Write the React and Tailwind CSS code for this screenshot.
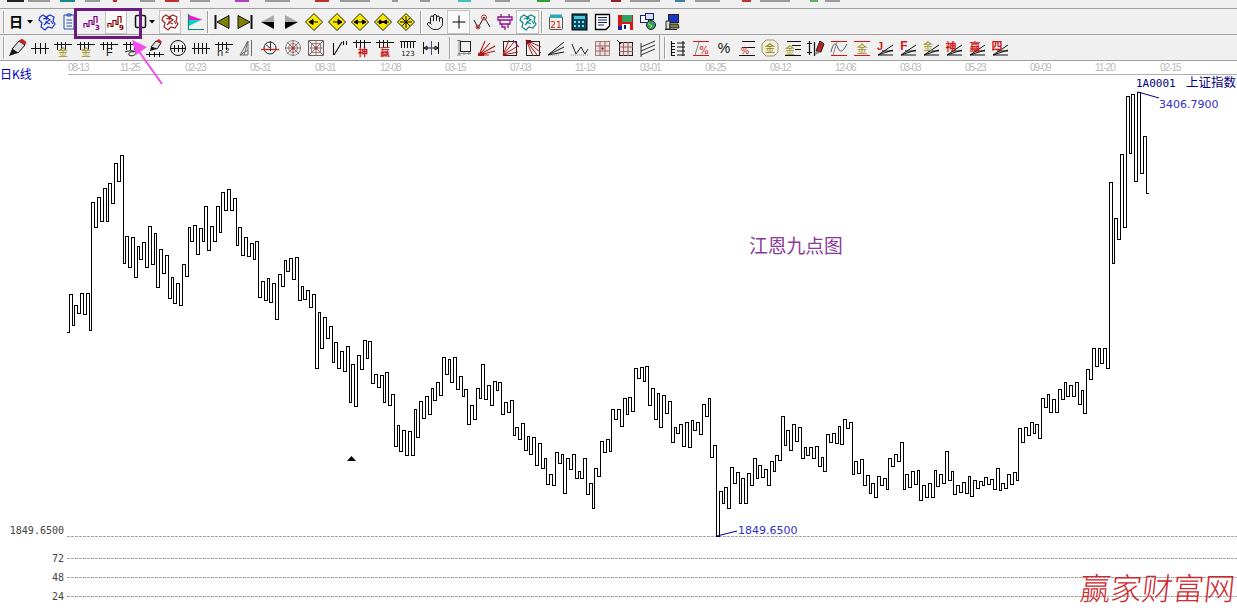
import { Hand } from "lucide-react";

const CJK = "Noto Sans CJK SC, sans-serif";
const DIGIT = "DejaVu Sans, sans-serif";
const MONO = "DejaVu Sans Mono, monospace";

const dates = ["11-25", "02-23", "05-31", "08-31", "12-08", "03-15", "07-03", "11-19", "03-01", "06-25", "09-12", "12-06", "03-03", "05-23", "09-09", "11-20", "02-15"];

// turning points of the nine point line: x, then the y it runs to
const line = [
  [69, 294], [72, 325], [74, 305], [77, 313], [80, 293], [83, 314], [86, 293], [89, 330], [91, 202], [94, 227],
  [97, 197], [100, 221], [103, 188], [106, 221], [108, 183], [111, 203], [114, 163], [117, 181], [120, 155], [123, 263],
  [125, 236], [128, 267], [131, 237], [134, 277], [137, 246], [139, 259], [142, 242], [145, 267], [148, 226], [151, 264],
  [154, 233], [156, 287], [159, 249], [162, 273], [165, 255], [168, 298], [171, 277], [173, 303], [176, 283], [179, 305],
  [182, 264], [185, 276], [188, 227], [190, 241], [193, 225], [196, 254], [199, 228], [202, 241], [204, 206], [207, 250],
  [210, 226], [213, 241], [216, 206], [219, 232], [221, 192], [224, 210], [227, 189], [230, 210], [233, 198], [236, 245],
  [238, 227], [241, 255], [244, 237], [247, 256], [250, 243], [253, 259], [255, 241], [258, 297], [261, 281], [264, 300],
  [267, 278], [269, 302], [272, 283], [275, 319], [278, 274], [281, 286], [284, 260], [286, 271], [289, 258], [292, 279],
  [295, 257], [298, 300], [301, 286], [303, 299], [306, 290], [309, 307], [312, 294], [315, 368], [318, 312], [320, 348],
  [323, 317], [326, 338], [329, 326], [332, 362], [334, 342], [337, 368], [340, 351], [343, 371], [346, 346], [349, 402],
  [351, 364], [354, 406], [357, 355], [360, 369], [363, 340], [366, 358], [368, 341], [371, 383], [374, 374], [377, 387],
  [380, 375], [383, 402], [385, 372], [388, 405], [391, 394], [394, 446], [397, 425], [399, 451], [402, 430], [405, 455],
  [408, 431], [411, 455], [414, 409], [416, 437], [419, 401], [422, 418], [425, 396], [428, 414], [431, 388], [433, 400],
  [436, 382], [439, 395], [442, 357], [445, 374], [448, 359], [450, 382], [453, 357], [456, 389], [459, 376], [462, 396],
  [464, 389], [467, 424], [470, 405], [473, 419], [476, 388], [479, 398], [481, 364], [484, 399], [487, 385], [490, 405],
  [493, 381], [496, 390], [498, 382], [501, 414], [504, 402], [507, 412], [510, 400], [513, 435], [515, 427], [518, 439],
  [521, 423], [524, 450], [527, 436], [529, 454], [532, 437], [535, 465], [538, 443], [541, 468], [544, 458], [546, 484],
  [549, 474], [552, 485], [555, 452], [558, 463], [561, 454], [563, 493], [566, 458], [569, 469], [572, 454], [575, 478],
  [578, 471], [580, 478], [583, 458], [586, 494], [589, 483], [592, 508], [594, 468], [597, 476], [600, 441], [603, 452],
  [606, 439], [609, 451], [611, 409], [614, 419], [617, 409], [620, 426], [623, 398], [626, 414], [628, 397], [631, 411],
  [634, 368], [637, 378], [640, 367], [643, 381], [645, 366], [648, 405], [651, 388], [654, 419], [657, 393], [659, 427],
  [662, 395], [665, 413], [668, 401], [671, 442], [674, 427], [676, 433], [679, 424], [682, 446], [685, 422], [688, 447],
  [691, 420], [693, 430], [696, 422], [699, 434], [702, 404], [705, 416], [708, 398], [710, 457], [713, 445], [716, 536],
  [719, 491], [722, 503], [724, 487], [727, 508], [730, 467], [733, 483], [736, 472], [739, 503], [741, 478], [744, 503],
  [747, 473], [750, 485], [753, 458], [756, 478], [758, 465], [761, 477], [764, 469], [767, 485], [770, 461], [773, 471],
  [775, 455], [778, 460], [781, 416], [784, 445], [786, 430], [789, 450], [792, 424], [795, 441], [798, 427], [801, 458],
  [804, 447], [806, 455], [809, 447], [812, 458], [815, 446], [818, 466], [821, 457], [823, 471], [826, 434], [829, 442],
  [832, 433], [835, 443], [838, 426], [840, 444], [843, 419], [846, 428], [849, 422], [852, 474], [854, 461], [857, 473],
  [860, 459], [863, 485], [866, 475], [869, 493], [871, 483], [874, 497], [877, 476], [880, 485], [883, 478], [886, 489],
  [888, 458], [891, 466], [894, 454], [897, 461], [900, 442], [903, 489], [905, 474], [908, 487], [911, 471], [914, 484],
  [917, 470], [919, 500], [922, 485], [925, 497], [928, 483], [931, 497], [934, 470], [936, 486], [939, 474], [942, 483],
  [945, 451], [948, 480], [951, 471], [953, 494], [956, 485], [959, 492], [962, 482], [965, 493], [968, 476], [970, 496],
  [973, 480], [976, 488], [979, 481], [982, 485], [984, 477], [987, 484], [990, 479], [993, 489], [996, 468], [999, 490],
  [1001, 483], [1004, 488], [1007, 474], [1010, 484], [1013, 472], [1016, 480], [1018, 428], [1021, 442], [1024, 427], [1027, 435],
  [1030, 422], [1033, 433], [1035, 424], [1038, 438], [1041, 398], [1044, 407], [1047, 394], [1049, 412], [1052, 399], [1055, 412],
  [1058, 389], [1061, 399], [1064, 382], [1066, 396], [1069, 385], [1072, 396], [1075, 382], [1078, 404], [1081, 390], [1083, 413],
  [1086, 369], [1089, 379], [1092, 348], [1095, 366], [1098, 348], [1100, 363], [1103, 348], [1106, 368], [1109, 182], [1112, 263],
  [1114, 218], [1117, 239], [1120, 154], [1123, 227], [1126, 96], [1129, 153], [1131, 94], [1134, 181], [1137, 92], [1140, 173],
  [1143, 136], [1146, 193],
];

const linePath = "M67 332.5" + line.map(([x, y]) => `H${x + 0.5}V${y + 0.5}`).join("") + "H1149";

// bits of the cut off menu bar icons at the very top
const topBits = [
  [7, 17, "#222"], [28, 22, "#999"], [60, 15, "#1a8a8a"], [85, 15, "#999"], [113, 4, "#d02020"], [140, 15, "#999"], [165, 14, "#c03030"],
  [190, 20, "#999"], [235, 14, "#b040c0"], [265, 25, "#999"], [315, 14, "#c03030"], [340, 30, "#999"], [392, 6, "#999"], [420, 10, "#999"],
  [458, 13, "#40c0c0"], [495, 15, "#999"], [537, 13, "#30a030"], [565, 25, "#999"], [611, 10, "#902020"], [630, 30, "#999"], [675, 10, "#4080a0"],
  [695, 25, "#999"], [742, 9, "#c03030"], [760, 30, "#999"], [810, 8, "#60b060"], [825, 15, "#999"],
];

function T({ w = "w-[23px]", pressed, children }) {
  return (
    <div className={`${w} h-[24px] shrink-0 flex items-center justify-center ${pressed ? "bg-[#f9f9f9] border border-[#c4c4c4]" : ""}`}>
      {children}
    </div>
  );
}

function Ic({ children, size = "w-5 h-5" }) {
  return (
    <svg viewBox="0 0 20 20" className={`${size} overflow-visible`} fill="none">
      {children}
    </svg>
  );
}

function Grip() {
  return <div className="w-[2px] h-[22px] shrink-0 border-l border-[#a0a0a0] bg-white" />;
}

function Label({ x, y, size = 8, fill = "#000", weight, children }) {
  return (
    <text x={x} y={y} fontSize={size} fill={fill} fontFamily={CJK} fontWeight={weight} textAnchor="middle">
      {children}
    </text>
  );
}

function Ticks({ n = 3, y = 4, x0 = 4, gap = 4, h = 8, color = "#111" }) {
  const xs = Array.from({ length: n }, (_, i) => x0 + i * gap + 0.5);
  return (
    <g stroke={color}>
      <path d={`M1 ${y + 2.5}H19`} />
      {xs.map((x) => (
        <path key={x} d={`M${x} ${y}v${h}`} />
      ))}
    </g>
  );
}

function Fan({ color = "#111" }) {
  return <path d="M3 17H18M3 17L18 12M3 17L18 7M7 13H18" stroke={color} />;
}

function Blob({ color }) {
  return (
    <path
      d="M3 5L6 3L9 5L13 3L17 5L16 9L18 12L15 16L11 15L8 18L4 15L5 11L2 8ZM6 7L10 6L13 8L9 10L13 12M7 13L10 10M11 4L9 8M14 9L16 12"
      stroke={color}
      strokeWidth="1.2"
    />
  );
}

function Wave({ color, n }) {
  return (
    <Ic>
      <path d="M2 15.5V11.5H5V14.5H7V8.5H10V12.5H12V4.5H15V11" stroke={color} strokeWidth="1.2" />
      <text x="13" y="18" fontSize="7" fontWeight="700" fill={color} fontFamily={DIGIT}>
        {n}
      </text>
    </Ic>
  );
}

function Diamond({ children }) {
  return (
    <Ic>
      <path d="M10 1.5L18.5 10L10 18.5L1.5 10Z" fill="#f8e800" stroke="#222" />
      <g stroke="#000" fill="#000">
        {children}
      </g>
    </Ic>
  );
}

function Pencil() {
  return (
    <>
      <path d="M5 11L12 3L18 7L11 15Z" fill="#e0e0e0" stroke="#111" />
      <path d="M12 3L15 1L19 4L18 7Z" fill="#d02020" stroke="#801010" strokeWidth="0.5" />
      <path d="M5 11L2 18L11 15Z" fill="#111" />
    </>
  );
}

function Row1() {
  return (
    <div className="h-[25px] flex items-center pl-[3px] border-b border-[#a0a0a0] box-content">
      <Grip />
      <T w="w-[21px]">
        <Ic>
          <Label x={10} y={15} size={14} weight="700">
            日
          </Label>
        </Ic>
      </T>
      <T w="w-[8px]">
        <svg viewBox="0 0 6 4" className="w-[6px] h-[4px]">
          <path d="M0 0H6L3 3.5Z" fill="#000" />
        </svg>
      </T>
      <div className="ml-px" />
      <T w="w-[24px]">
        <Ic>
          <Blob color="#2038c8" />
        </Ic>
      </T>
      <T w="w-[20px]">
        <Ic>
          <path d="M5 3H15V17H5ZM8 2H12V4H8ZM7.500 8H13M7.500 11H13M7.500 14H13" stroke="#2050b0" />
        </Ic>
      </T>
      <div className="ml-px" />
      <T w="w-[24px]">
        <Wave color="#800080" n="3" />
      </T>
      <div className="ml-px" />
      <T w="w-[22px]" pressed>
        <Wave color="#800000" n="9" />
      </T>
      <T w="w-[22px]">
        <Ic>
          <rect x="7.500" y="3.500" width="10" height="12" rx="1.500" stroke="#111" strokeWidth="1.500" />
        </Ic>
      </T>
      <T w="w-[6px]">
        <svg viewBox="0 0 6 4" className="w-[6px] h-[4px]">
          <path d="M0 0H6L3 3.5Z" fill="#000" />
        </svg>
      </T>
      <div className="ml-[4px]" />
      <T w="w-[22px]" pressed>
        <Ic>
          <Blob color="#a02828" />
        </Ic>
      </T>
      <div className="ml-[2px]" />
      <T w="w-[24px]">
        <Ic>
          <path d="M4 3L18 8H4Z" fill="#f018c8" />
          <path d="M4 8H16L4 14Z" fill="#10d0c0" />
          <path d="M3.500 2V17.500H19" stroke="#108080" strokeWidth="1.200" />
        </Ic>
      </T>
      <Grip />
      <div className="ml-px" />
      <T>
        <Ic>
          <path d="M3.500 3V17" stroke="#111" strokeWidth="2" />
          <path d="M17 3.500V16.500L5 10Z" fill="#808000" stroke="#111" />
        </Ic>
      </T>
      <T>
        <Ic>
          <path d="M16.500 3V17" stroke="#111" strokeWidth="2" />
          <path d="M3 3.500V16.500L15 10Z" fill="#808000" stroke="#111" />
        </Ic>
      </T>
      <T>
        <Ic>
          <path d="M16 3V10H3Z" fill="#a8a8a8" />
          <path d="M16 17V10H3Z" fill="#000" />
        </Ic>
      </T>
      <T>
        <Ic>
          <path d="M4 3V10H17Z" fill="#a8a8a8" />
          <path d="M4 17V10H17Z" fill="#000" />
        </Ic>
      </T>
      <T>
        <Diamond>
          <path d="M6 10H14" />
          <path d="M5 10L9 7.500V12.500Z" />
        </Diamond>
      </T>
      <T>
        <Diamond>
          <path d="M6 10H14" />
          <path d="M15 10L11 7.500V12.500Z" />
        </Diamond>
      </T>
      <T>
        <Diamond>
          <path d="M6 10H14" />
          <path d="M4 10L7.500 8V12Z" />
          <path d="M16 10L12.500 8V12Z" />
        </Diamond>
      </T>
      <T>
        <Diamond>
          <path d="M4 10H16" />
          <path d="M10 10L6.500 8V12Z" />
          <path d="M10 10L13.500 8V12Z" />
        </Diamond>
      </T>
      <T>
        <Diamond>
          <path d="M4 10H16M10 4V16M6 6L14 14M14 6L6 14" />
        </Diamond>
      </T>
      <div className="ml-[3px]" />
      <Grip />
      <div className="ml-px" />
      <T>
        <Hand size={18} strokeWidth={1.3} color="#111" />
      </T>
      <div className="ml-px" />
      <T pressed>
        <Ic>
          <path d="M10 3.500V16.500M3.500 10H16.500" stroke="#000" />
        </Ic>
      </T>
      <T>
        <Ic>
          <path d="M2 8L6 16L12 5L18 15" stroke="#222" />
          <circle cx="6" cy="15" r="2" stroke="#d02020" />
          <circle cx="12" cy="5.500" r="2.500" stroke="#d02020" />
        </Ic>
      </T>
      <T>
        <Ic>
          <path d="M3 5H17V8H3ZM6 2V5M14 2V5M5 8V12H15V8M7 12V15H10V18M13 12V16" stroke="#901090" strokeWidth="1.300" />
        </Ic>
      </T>
      <T pressed>
        <Ic>
          <Blob color="#108888" />
        </Ic>
      </T>
      <div className="ml-[2px]" />
      <Grip />
      <div className="ml-px" />
      <T>
        <Ic>
          <rect x="3.500" y="4.500" width="13" height="13" rx="1" fill="#f4f0e8" stroke="#555" />
          <path d="M4 2.500H16V6H4Z" fill="#30a8b0" />
          <text x="10" y="16" fontSize="9" textAnchor="middle" fill="#c02020" fontFamily={DIGIT}>
            21
          </text>
        </Ic>
      </T>
      <T>
        <Ic>
          <rect x="3" y="2" width="15" height="16" fill="#084a60" stroke="#000" />
          <rect x="5" y="4" width="11" height="3" fill="#50c8d8" />
          <path d="M5 9h2v2H5ZM9 9h2v2H9ZM13 9h2v2h-2ZM5 13h2v2H5ZM9 13h2v2H9ZM13 13h2v2h-2Z" fill="#80e0e8" />
        </Ic>
      </T>
      <T>
        <Ic>
          <path d="M3.500 2.500H17.500V14L14 17.500H3.500Z" fill="#fff" stroke="#000" strokeWidth="1.300" />
          <path d="M6 5.500H15M6 8H15M6 10.500H15M6 13H12" stroke="#102060" />
        </Ic>
      </T>
      <T>
        <Ic>
          <rect x="3" y="3" width="15" height="15" fill="#d81818" />
          <rect x="7" y="3" width="10" height="7" fill="#30a060" />
          <rect x="7" y="12" width="8" height="6" fill="#fff" />
          <rect x="3" y="14" width="4" height="4" fill="#1028a0" />
          <rect x="9" y="13" width="2" height="4" fill="#102060" />
        </Ic>
      </T>
      <T>
        <Ic>
          <rect x="2.500" y="3.500" width="8" height="7" fill="#fff" stroke="#102080" />
          <rect x="7.500" y="1.500" width="8" height="6" fill="#dde" stroke="#102080" />
          <circle cx="13" cy="13" r="4.500" fill="#30a070" stroke="#222" />
          <path d="M10 11.500L14 14L12 16" stroke="#e0e040" />
        </Ic>
      </T>
      <T>
        <Ic>
          <rect x="7.500" y="2.500" width="10" height="8" fill="#1838c0" stroke="#222" />
          <path d="M5 9H9V17H5Z" fill="#d8d8d0" stroke="#222" />
          <path d="M9 12H17L18 16H9Z" fill="#808040" stroke="#222" />
          <path d="M4 17.500H16" stroke="#222" />
        </Ic>
      </T>
    </div>
  );
}

function Row2() {
  return (
    <div className="h-[25px] flex items-center pl-[3px] border-b border-[#a0a0a0] box-content">
      <Grip />
      <div className="ml-px" />
      <T w="w-[22px]">
        <Ic>
          <Pencil />
        </Ic>
      </T>
      <T>
        <Ic>
          <path d="M1 10.500H19M5.500 5V16M10.500 5V16M15.500 5V16" stroke="#111" />
        </Ic>
      </T>
      <T>
        <Ic>
          <Ticks />
          <Label x={10} y={18} size={10} fill="#a09020">
            金
          </Label>
        </Ic>
      </T>
      <T>
        <Ic>
          <Ticks />
          <Label x={10} y={18} size={10} fill="#a09020">
            金
          </Label>
        </Ic>
      </T>
      <T>
        <Ic>
          <Ticks />
          <text x="7" y="18" fontSize="11" fill="#111" fontFamily="Liberation Sans, sans-serif">
            F
          </text>
        </Ic>
      </T>
      <T>
        <Ic>
          <Ticks />
          <path d="M3 14c2-1 9-2 11 0 1 3-5 5-7 3-1-2 2-4 5-3" stroke="#111" />
        </Ic>
      </T>
      <T>
        <Ic>
          <path d="M6 9L11 3L16 5L12 11Z" fill="#ddd" stroke="#111" />
          <path d="M11 3L14 1L17 4L16 5Z" fill="#d02020" />
          <path d="M6 9L5 13L12 11Z" fill="#111" />
          <path d="M1 16.500H19M4.500 14V19M9.500 14V19M14.500 14V19" stroke="#111" />
        </Ic>
      </T>
      <T>
        <Ic>
          <circle cx="10" cy="10" r="7.500" stroke="#111" />
          <path d="M2 10.500H18M6.500 7V14M10.500 7V14M14.500 7V14" stroke="#111" />
        </Ic>
      </T>
      <T>
        <Ic>
          <path d="M1 10.500H19M3.500 5V16M7.500 5V16M11.500 5V16M15.500 5V16" stroke="#111" />
        </Ic>
      </T>
      <T>
        <Ic>
          <Ticks />
          <text x="3" y="18" fontSize="10" fill="#111" fontFamily={DIGIT}>
            n
          </text>
          <text x="11" y="15" fontSize="7" fill="#111" fontFamily={DIGIT}>
            2
          </text>
        </Ic>
      </T>
      <T>
        <Ic>
          <path d="M3 17L11 3V17ZM7 17L11 3M3 17L11 12M14.500 2V18" stroke="#666" />
        </Ic>
      </T>
      <T>
        <Ic>
          <circle cx="10" cy="10" r="6" stroke="#222" />
          <path d="M1 11.500H19" stroke="#d02020" strokeWidth="1.300" />
          <path d="M10.500 3V13M10 10L5 6" stroke="#333" />
        </Ic>
      </T>
      <T>
        <Ic>
          <circle cx="10" cy="10" r="7.500" stroke="#8a9090" />
          <circle cx="10" cy="10" r="4.500" stroke="#8a9090" />
          <path d="M2 10H18M10 2V18M4 4L16 16M16 4L4 16" stroke="#a06060" />
          <circle cx="10" cy="10" r="1.500" fill="#c02020" />
        </Ic>
      </T>
      <T>
        <Ic>
          <rect x="2.500" y="2.500" width="15" height="15" stroke="#666" />
          <rect x="5.500" y="5.500" width="9" height="9" stroke="#888" />
          <path d="M2 2L18 18M18 2L2 18M10 2V18M2 10H18" stroke="#a07070" />
          <circle cx="10" cy="10" r="1.500" fill="#c02020" />
        </Ic>
      </T>
      <T>
        <Ic>
          <path d="M4.500 5V17M5 17L13 4M14.500 3V7M17.500 3V7" stroke="#111" strokeWidth="1.100" />
        </Ic>
      </T>
      <T>
        <Ic>
          <Ticks y={2} />
          <Label x={11} y={18} size={10} fill="#d01010" weight="700">
            神
          </Label>
        </Ic>
      </T>
      <T>
        <Ic>
          <Ticks y={2} />
          <Label x={10} y={18} size={10} fill="#d01010" weight="700">
            赢
          </Label>
        </Ic>
      </T>
      <T>
        <Ic>
          <path d="M2 3.500H18M3.500 3V10M6.500 3V10M9.500 3V10M12.500 3V10M15.500 3V10" stroke="#111" />
          <text x="10" y="18" fontSize="7" textAnchor="middle" fill="#111" fontFamily={DIGIT}>
            123
          </text>
        </Ic>
      </T>
      <T>
        <Ic>
          <path d="M2.500 4V16M17.500 4V16M3 10H17M3 10L6 8V12ZM17 10L14 8V12Z" stroke="#111" />
          <path d="M10.500 3V17" stroke="#405090" />
        </Ic>
      </T>
      <div className="ml-[7px]" />
      <Grip />
      <div className="ml-px" />
      <T>
        <Ic>
          <rect x="6.500" y="3.500" width="10" height="10" stroke="#222" />
          <path d="M3 2.500H7M5 2V17M3 17H7M4 15.500H17M10 14V17M15 14V17" stroke="#888" />
        </Ic>
      </T>
      <T>
        <Ic>
          <path d="M2 17L8 3M2 17L13 5M2 17L18 8M2 17L18 13M2 17L12 17" stroke="#b01818" strokeWidth="1.100" />
          <path d="M1 18H7V15H1Z" fill="#b01818" />
        </Ic>
      </T>
      <T>
        <Ic>
          <rect x="3.500" y="3.500" width="13" height="14" stroke="#222" />
          <path d="M3 17L9 2M3 17L14 4M3 17L18 8M3 17L18 14" stroke="#b01818" />
          <path d="M13 2L19 9" stroke="#801080" />
        </Ic>
      </T>
      <T>
        <Ic>
          <rect x="3.500" y="3.500" width="13" height="14" stroke="#222" />
          <path d="M3 2L10 18M3 2L14 17M3 2L18 15M3 2L18 9" stroke="#b01818" />
          <path d="M3 2H8V5H3Z" fill="#801010" />
        </Ic>
      </T>
      <T>
        <Ic>
          <path d="M2 17L18 4M2 17L18 9M2 17L18 14" stroke="#111" />
          <path d="M2 17H14" stroke="#888" strokeDasharray="1 1" />
        </Ic>
      </T>
      <T>
        <Ic>
          <path d="M3 6L7 16L12 9L16 16L19 11" stroke="#222" />
          <path d="M2 17H19" stroke="#888" strokeDasharray="1 1" />
        </Ic>
      </T>
      <T>
        <Ic>
          <rect x="3.500" y="3.500" width="14" height="14" fill="#e8e0e0" stroke="#a08080" />
          <path d="M8 3V18M13 3V18M3 8H18M3 13H18" stroke="#a06060" />
          <circle cx="10.500" cy="10.500" r="1.200" fill="#a02020" />
        </Ic>
      </T>
      <T>
        <Ic>
          <rect x="4.500" y="4.500" width="13" height="13" fill="#e8e0e0" stroke="#222" />
          <path d="M8.500 4V18M13 4V18M4 9H18M4 13.500H18" stroke="#a06060" />
          <path d="M2 2L6 6" stroke="#111" />
        </Ic>
      </T>
      <T>
        <Ic>
          <path d="M3 9L17 3M3 13L17 7M3 17L17 11M3 5L3 19" stroke="#333" />
        </Ic>
      </T>
      <div className="w-px h-[25px] shrink-0 bg-[#a0a0a0]" />
      <div className="ml-[4px]" />
      <Grip />
      <T>
        <Ic>
          <path d="M3.500 3V18M3 5.500H7M3 8.500H7M3 11.500H7M3 14.500H7M3 17.500H7" stroke="#111" strokeWidth="1.100" />
          <path d="M9 5H17M9 9H17M9 13H17M9 17H17M15 3V18" stroke="#111" strokeWidth="1.100" />
        </Ic>
      </T>
      <T>
        <Ic>
          <path d="M2 3.500H18M2 17.500H18" stroke="#d01818" />
          <path d="M8 4L4 17" stroke="#888" />
          <text x="13" y="16" fontSize="10" textAnchor="middle" fill="#d01818" fontFamily={DIGIT}>
            %
          </text>
        </Ic>
      </T>
      <T>
        <Ic>
          <text x="10" y="15" fontSize="14" textAnchor="middle" fill="#111" fontFamily="Liberation Sans, sans-serif">
            %
          </text>
        </Ic>
      </T>
      <T>
        <Ic>
          <path d="M5 3.500H18M5 9.500H18M2 17.500H18" stroke="#111" />
          <text x="8" y="16" fontSize="9" textAnchor="middle" fill="#d01818" fontFamily={DIGIT}>
            %
          </text>
        </Ic>
      </T>
      <T>
        <Ic>
          <path d="M6 2H14L18 6V14L14 18H6L2 14V6Z" fill="#f4eed8" stroke="#a09870" />
          <Label x={10} y={14} size={10} fill="#8a8010">
            金
          </Label>
        </Ic>
      </T>
      <T>
        <Ic>
          <path d="M4 3.500H18M9 7.500H18M12 11.500H18M2 17.500H18" stroke="#111" />
          <Label x={7} y={16} size={10} fill="#a09020">
            金
          </Label>
        </Ic>
      </T>
      <T>
        <Ic>
          <path d="M3.500 3V17M1 5.500H6M1 14.500H6M8.500 4V18" stroke="#111" strokeWidth="1.200" />
          <path d="M10 13L14 3L18 6L15 14Z" fill="#c02020" stroke="#222" />
          <path d="M10 13L9 17L15 14Z" fill="#888" />
        </Ic>
      </T>
      <T>
        <Ic>
          <path d="M2 3.500H18M2 17.500H18" stroke="#d01818" />
          <path d="M2 14C5 2 7 6 9 10C11 15 14 14 18 6" stroke="#555" />
          <path d="M8 4L4 17" stroke="#888" />
        </Ic>
      </T>
      <T>
        <Ic>
          <path d="M2 3.500H18M2 17.500H18" stroke="#d01818" />
          <Label x={10} y={15} size={11} fill="#a09020">
            金
          </Label>
        </Ic>
      </T>
      <T>
        <Ic>
          <Fan />
          <text x="5" y="12" fontSize="11" fontWeight="700" textAnchor="middle" fill="#d01818" fontFamily="Liberation Sans, sans-serif">
            J
          </text>
        </Ic>
      </T>
      <T>
        <Ic>
          <Fan />
          <text x="6" y="12" fontSize="12" fontWeight="700" textAnchor="middle" fill="#d01818" fontFamily="Liberation Sans, sans-serif">
            F
          </text>
        </Ic>
      </T>
      <T>
        <Ic>
          <Fan />
          <Label x={7} y={12} size={10} fill="#a09020">
            金
          </Label>
        </Ic>
      </T>
      <T>
        <Ic>
          <Fan />
          <Label x={7} y={13} size={11} fill="#d01818" weight="700">
            神
          </Label>
        </Ic>
      </T>
      <T>
        <Ic>
          <Fan />
          <Label x={8} y={13} size={11} fill="#d01818" weight="700">
            赢
          </Label>
        </Ic>
      </T>
      <T>
        <Ic>
          <Fan />
          <Label x={7} y={12} size={11} fill="#d01818" weight="700">
            四
          </Label>
        </Ic>
      </T>
    </div>
  );
}

function Chart() {
  return (
    <svg viewBox="0 75 1237 538" className="block w-full h-[538px]" fill="none">
      <g stroke="#a4a4a4" strokeDasharray="3 1" shapeRendering="crispEdges">
        <path d="M67 536.500H1237" />
        <path d="M67 558.500H1237" />
        <path d="M67 577.500H1237" />
        <path d="M67 596.500H1237" />
      </g>
      <path d={linePath} stroke="#000" shapeRendering="crispEdges" />
      <path d="M347 461H356L351.500 456Z" fill="#000" />
      <path d="M717 536L737 531" stroke="#000080" />
      <path d="M1138 92L1159 98" stroke="#000080" />

      <g fontFamily={MONO} fontSize="10" fill="#444" textAnchor="end">
        <text x="64" y="534">
          1849.6500
        </text>
        <text x="64" y="562">
          72
        </text>
        <text x="64" y="581">
          48
        </text>
        <text x="64" y="600">
          24
        </text>
      </g>
      <g fontFamily={DIGIT} fontSize="11" fill="#3030c8">
        <text x="738" y="534">
          1849.6500
        </text>
        <text x="1159" y="108">
          3406.7900
        </text>
      </g>
      <text x="1136" y="87" fontFamily={MONO} fontSize="11" fill="#000080">
        1A0001
      </text>
      <text x="1186" y="87" fontFamily={CJK} fontSize="12.500" fill="#000080">
        上证指数
      </text>
      <text x="749" y="253" fontFamily={CJK} fontSize="18.800" fill="#8a3a9a">
        江恩九点图
      </text>
    </svg>
  );
}

export default function App() {
  return (
    <div className="relative w-[1237px] h-[613px] overflow-hidden bg-white font-['Liberation_Sans','Noto_Sans_CJK_SC',sans-serif]">
      <div className="bg-[#f0f0f0]">
        <div className="h-[8px] border-b border-[#a0a0a0] box-content">
          <svg viewBox="0 0 1237 8" className="block w-full h-[8px]">
            {topBits.map(([x, w, c]) => (
              <rect key={x} x={x} y="0" width={w} height="2" fill={c} />
            ))}
          </svg>
        </div>
        <Row1 />
        <Row2 />
      </div>

      <div className="h-[14px] flex items-start">
        <div className="w-[68px] shrink-0 h-[14px] text-[12px] leading-[15px] pt-[5px] text-[#0000c0] font-['Noto_Sans_CJK_SC',sans-serif] whitespace-nowrap">
          日K线
        </div>
        <div className="flex-1 flex h-[13px] border-b border-[#b0b0b0] box-content text-[10px] leading-[13px] tracking-[-1px] text-[#b8b8b8]">
          <div className="w-[52px]">08-13</div>
          {dates.map((d, i) => (
            <div key={i} className="w-[65px] shrink-0">
              {d}
            </div>
          ))}
        </div>
      </div>

      <Chart />

      {/* purple note box and arrow drawn over the toolbar */}
      <div className="absolute left-[74px] top-[8px] w-[68px] h-[31px] border-[3px] border-[#6c1a80]" />
      <svg viewBox="0 0 1237 613" className="absolute left-0 top-0 w-[1237px] h-[613px] pointer-events-none">
        <path d="M162 84L138 50" stroke="#f04cf0" strokeWidth="2" />
        <path d="M132 40L147 47L136 55Z" fill="#f04cf0" />
      </svg>

      <div className="absolute left-[1080px] top-[568px] text-[31px] leading-[38px] font-light text-[#cc2a30] -skew-x-6 whitespace-nowrap font-['Noto_Sans_CJK_SC',sans-serif]">
        赢家财富网
      </div>
    </div>
  );
}
